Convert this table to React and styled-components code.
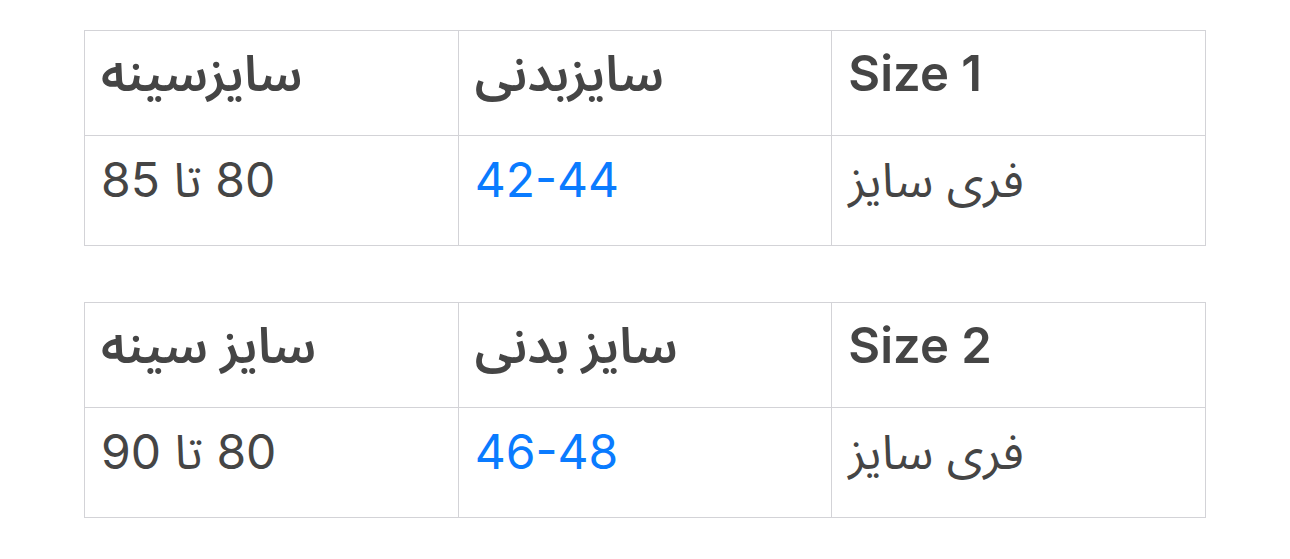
import React from "react"
import styled, { createGlobalStyle } from "styled-components"

const GlobalStyle = createGlobalStyle`
    body {
        margin: 0;
        background: #ffffff;
        font-family: Inter, "Noto Sans Arabic", "DejaVu Sans", sans-serif;
        color: #454545;
    }
`

const Page = styled.div`
    padding: 30px 84px;
    display: flex;
    flex-direction: column;
    gap: 56px;
`

const Table = styled.table`
    width: 100%;
    direction: rtl;
    border-collapse: collapse;
    table-layout: fixed;
`

const Cell = styled.td`
    border: 1px solid #d3d3d7;
    text-align: left;
    vertical-align: top;
    padding: ${props => props.head ? "14px 16px 0" : "15px 16px 0"};
    height: ${props => props.head ? "105px" : "110px"};
    box-sizing: border-box;
    font-size: ${props => props.head ? "49px" : "48px"};
    font-weight: ${props => props.head ? 600 : 400};
    line-height: 1.2;
    color: ${props => props.blue ? "#0a7bff" : "#454545"};
`

const tables = [
    { title: "Size 1", body: "سایزبدنی", chest: "سایزسینه", free: "فری سایز", range: "42-44", chestRange: "80 تا 85" },
    { title: "Size 2", body: "سایز بدنی", chest: "سایز سینه", free: "فری سایز", range: "46-48", chestRange: "80 تا 90" },
]

export default function App() {
    return (
        <>
            <GlobalStyle />
            <Page>
                {tables.map(t => (
                    <Table key={t.title}>
                        <tbody>
                            <tr>
                                <Cell head><span dir="ltr">{t.title}</span></Cell>
                                <Cell head>{t.body}</Cell>
                                <Cell head>{t.chest}</Cell>
                            </tr>
                            <tr>
                                <Cell>{t.free}</Cell>
                                <Cell blue>{t.range}</Cell>
                                <Cell>{t.chestRange}</Cell>
                            </tr>
                        </tbody>
                    </Table>
                ))}
            </Page>
        </>
    )
}
